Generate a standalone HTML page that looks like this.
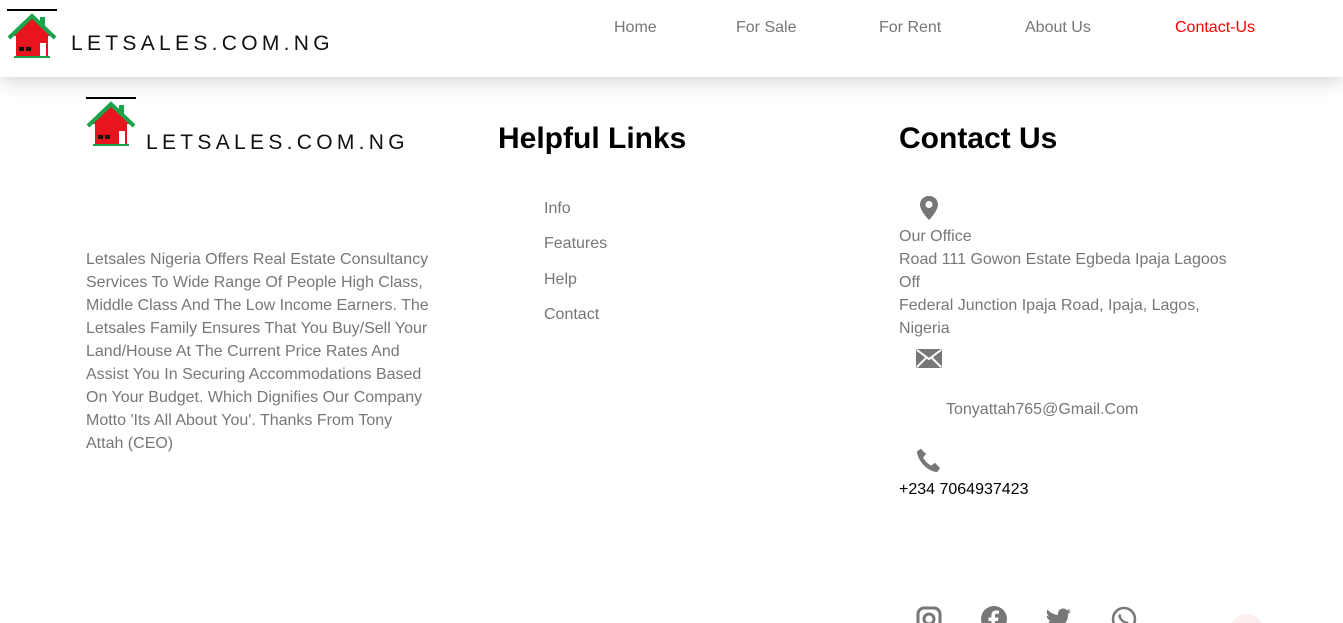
<!DOCTYPE html>
<html><head><meta charset="utf-8"><style>
*{margin:0;padding:0;box-sizing:border-box}
html,body{width:1343px;height:623px;overflow:hidden}
body{background:#fff;font-family:"Liberation Sans",sans-serif;position:relative;color:#777}
.hdr{position:absolute;left:0;top:0;width:1343px;height:77px;background:#fff;box-shadow:0 4px 18px rgba(0,0,0,.18);z-index:2}
.a{position:absolute;white-space:nowrap}
.logo{position:absolute;width:50px;height:50px}
.brand{letter-spacing:4.3px;color:#111;font-size:21px}
.nav{font-size:16px;color:#777;top:19px}
h2{position:absolute;font-size:30px;color:#000;font-weight:bold}
.t{font-size:16px;line-height:23px;color:#777}
</style></head><body>
<svg width="0" height="0" style="position:absolute"><defs>
<symbol id="house" viewBox="0 0 50 50"><rect x="0" y="0" width="50" height="2" fill="#000"/><polygon points="25,6 4,27 9,27 9,48 41,48 41,27 46,27" fill="#e8151e"/><polyline points="2,29 25,7 48,29" fill="none" stroke="#1aa34a" stroke-width="4"/><rect x="33" y="8" width="5" height="10" fill="#1aa34a"/><rect x="12" y="38" width="5" height="4" fill="#111"/><rect x="19" y="38" width="5" height="4" fill="#111"/><rect x="33" y="34" width="6" height="14" fill="#fff"/><rect x="7" y="47" width="36" height="2" fill="#1aa34a"/></symbol>
</defs></svg>
<div class="hdr">
<svg class="logo" style="left:7px;top:9px"><use href="#house"/></svg>
<div class="a brand" style="left:71px;top:32px">LETSALES.COM.NG</div>
<div class="a nav" style="left:614px">Home</div>
<div class="a nav" style="left:736px">For Sale</div>
<div class="a nav" style="left:879px">For Rent</div>
<div class="a nav" style="left:1025px">About Us</div>
<div class="a nav" style="left:1175px;color:#f00">Contact-Us</div>
</div>
<svg class="logo" style="left:86px;top:97px"><use href="#house"/></svg>
<div class="a brand" style="left:146px;top:131px">LETSALES.COM.NG</div>
<div class="a t" style="left:86px;top:248px">Letsales Nigeria Offers Real Estate Consultancy<br>Services To Wide Range Of People High Class,<br>Middle Class And The Low Income Earners. The<br>Letsales Family Ensures That You Buy/Sell Your<br>Land/House At The Current Price Rates And<br>Assist You In Securing Accommodations Based<br>On Your Budget. Which Dignifies Our Company<br>Motto 'Its All About You'. Thanks From Tony<br>Attah (CEO)</div>
<h2 style="left:498px;top:122px">Helpful Links</h2>
<div class="a t" style="left:544px;top:197px">Info</div>
<div class="a t" style="left:544px;top:232px">Features</div>
<div class="a t" style="left:544px;top:268px">Help</div>
<div class="a t" style="left:544px;top:303px">Contact</div>
<h2 style="left:899px;top:122px">Contact Us</h2>
<svg class="a" style="left:918px;top:195px" width="22" height="26" viewBox="0 0 22 26"><path d="M11 1C5.5 1 2 5 2 9.5 2 16 11 25 11 25S20 16 20 9.5C20 5 16.5 1 11 1Z" fill="#777"/><circle cx="11" cy="9.5" r="3.5" fill="#fff"/></svg>
<div class="a t" style="left:899px;top:225px;width:340px;white-space:normal">Our Office<br>Road 111 Gowon Estate Egbeda Ipaja Lagoos Off<br>Federal Junction Ipaja Road, Ipaja, Lagos, Nigeria</div>
<svg class="a" style="left:916px;top:349px" width="26" height="19" viewBox="0 0 26 19"><rect width="26" height="19" rx="2" fill="#777"/><path d="M1 1L13 10 25 1M1 18L10 9M25 18L16 9" stroke="#fff" stroke-width="2" fill="none"/></svg>
<div class="a t" style="left:946px;top:398px">Tonyattah765@Gmail.Com</div>
<svg class="a" style="left:915px;top:447px" width="28" height="28" viewBox="0 0 24 24"><path d="M5 1.5l4.5 4.5-2.5 3c1.5 3 4 5.5 7 7l3-2.5 4.5 4.5-2.5 3.5C11 21 3 13 1.5 4z" fill="#777"/></svg>
<div class="a t" style="left:899px;top:478px;color:#000">+234 7064937423</div>
<svg class="a" style="left:916px;top:606px" width="26" height="26" viewBox="0 0 26 26"><rect x="2" y="2" width="22" height="22" rx="6" fill="none" stroke="#777" stroke-width="3"/><circle cx="13" cy="13" r="5" fill="none" stroke="#777" stroke-width="3"/></svg>
<svg class="a" style="left:981px;top:606px" width="26" height="26" viewBox="0 0 26 26"><circle cx="13" cy="13" r="13" fill="#777"/><path d="M14 26V15h3l.5-3.5H14V9.5c0-1 .4-1.7 1.8-1.7H18V4.7c-.5 0-1.6-.2-3-.2-3 0-4.6 1.8-4.6 4.9v2.1H7.5V15h2.9v11z" fill="#fff"/></svg>
<svg class="a" style="left:1046px;top:608px" width="26" height="22" viewBox="0 0 26 22"><path d="M25 3c-1 .4-2 .7-3 .8 1-.6 2-1.6 2.3-2.8-1 .6-2.1 1-3.3 1.3C20 1 18.6.5 17.2.5c-2.9 0-5.2 2.3-5.2 5.2 0 .4 0 .8.1 1.2C7.8 6.7 4 4.6 1.5 1.5c-.5.8-.7 1.7-.7 2.6 0 1.8.9 3.4 2.3 4.3-.8 0-1.6-.3-2.300-.6 0 2.500 1.800 4.600 4.100 5.100-.8.200-1.700.300-2.400.100.700 2.100 2.600 3.600 4.900 3.600-2.200 1.700-5 2.700-8 2.300 2.300 1.500 5 2.300 8 2.300 9.500 0 14.700-7.900 14.700-14.700v-.7C23.4 5 24.3 4 25 3z" fill="#777"/></svg>
<svg class="a" style="left:1111px;top:606px" width="26" height="26" viewBox="0 0 26 26"><circle cx="13" cy="13" r="11" fill="none" stroke="#777" stroke-width="2.5"/><path d="M9 8c1 0 1.5 2.5 1 3 1 2 2.5 3.5 4.5 4.5.5-.5 3 0 3 1-.5 1.5-1.5 2-3 1.5-3-1-6-4-7-7-.3-1.5.5-2.8 1.5-3z" fill="#777"/></svg>
<div class="a" style="left:1230px;top:614px;width:34px;height:34px;border-radius:50%;background:#fdeef0"></div>
</body></html>
